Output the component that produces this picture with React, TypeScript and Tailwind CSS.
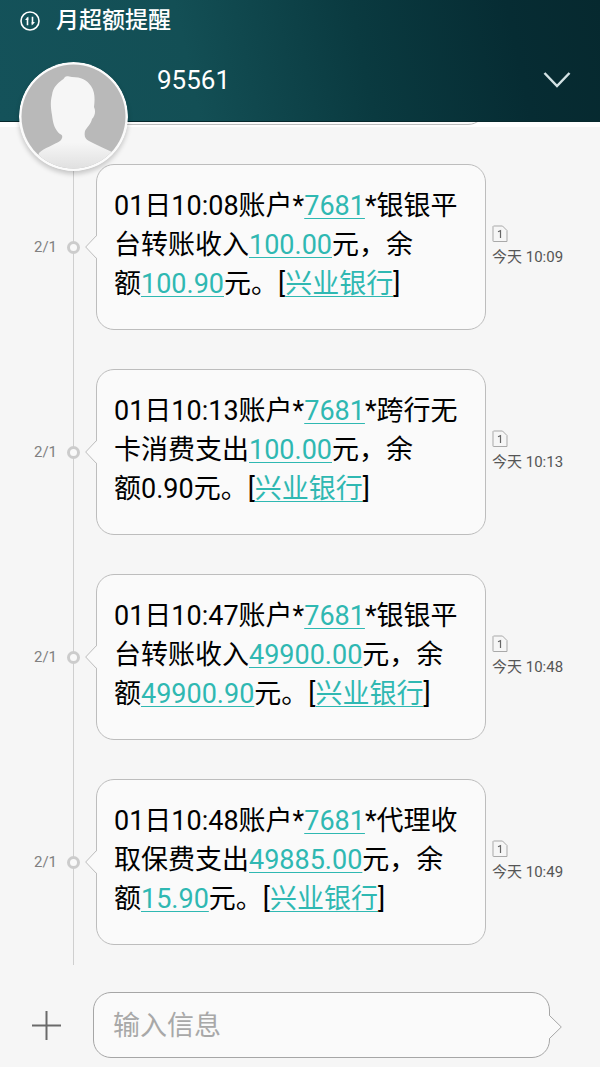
import { Fragment } from "react";

type Part = string | { link: string };

interface Message {
  id: number;
  date: string;
  time: string;
  lines: Part[][];
}

const MESSAGES: Message[] = [
  {
    id: 1,
    date: "2/1",
    time: "今天 10:09",
    lines: [
      ["01日10:08账户*", { link: "7681" }, "*银银平"],
      ["台转账收入", { link: "100.00" }, "元，余"],
      ["额", { link: "100.90" }, "元。[", { link: "兴业银行" }, "]"],
    ],
  },
  {
    id: 2,
    date: "2/1",
    time: "今天 10:13",
    lines: [
      ["01日10:13账户*", { link: "7681" }, "*跨行无"],
      ["卡消费支出", { link: "100.00" }, "元，余"],
      ["额0.90元。[", { link: "兴业银行" }, "]"],
    ],
  },
  {
    id: 3,
    date: "2/1",
    time: "今天 10:48",
    lines: [
      ["01日10:47账户*", { link: "7681" }, "*银银平"],
      ["台转账收入", { link: "49900.00" }, "元，余"],
      ["额", { link: "49900.90" }, "元。[", { link: "兴业银行" }, "]"],
    ],
  },
  {
    id: 4,
    date: "2/1",
    time: "今天 10:49",
    lines: [
      ["01日10:48账户*", { link: "7681" }, "*代理收"],
      ["取保费支出", { link: "49885.00" }, "元，余"],
      ["额", { link: "15.90" }, "元。[", { link: "兴业银行" }, "]"],
    ],
  },
];

function DataIcon() {
  return (
    <svg className="w-5 h-5" viewBox="0 0 20 20" fill="none" stroke="currentColor">
      <circle cx="10" cy="10" r="9" strokeWidth="1.6" />
      <path d="M7.500 14.200V6.500M12.500 5.800v7.500" strokeWidth="1.600" />
      <path d="M5 9L8.300 5.400V9zM15 11L11.700 14.600V11z" fill="currentColor" stroke="none" />
    </svg>
  );
}

function Avatar() {
  return (
    <svg
      className="absolute left-[19px] top-[62px] w-[109px] h-[109px] rounded-full shadow-[0_3px_5px_rgba(0,0,0,0.2)]"
      viewBox="0 0 109 109"
    >
      <defs>
        <linearGradient id="person" x1="0" y1="0" x2="0" y2="1">
          <stop offset="0.7" stopColor="#f6f6f6" />
          <stop offset="1" stopColor="#dedede" />
        </linearGradient>
        <clipPath id="face">
          <circle cx="54.5" cy="54.5" r="52" />
        </clipPath>
      </defs>
      <circle cx="54.5" cy="54.5" r="54.5" fill="#fbfbfb" />
      <circle cx="54.5" cy="54.5" r="52" fill="#b9b9b9" />
      <path
        clipPath="url(#face)"
        fill="url(#person)"
        d="M46 15C48 13.500 50 15 53 15C62 15 68 18 72 24C76 30 76 37 75 45C77 49 76 54 73 57C72 62 68 65 66 69C65 74 66 77 70 79C77 83 85 86 93 90L93 109H15L20 91C25 86 35 83 41 79C44 76 44 73 41 72C36 68 34 62 33 53C32 47 31 41 33 33C34 25 39 21 43 18C45 17 45 16 46 15Z"
      />
    </svg>
  );
}

function SimIcon() {
  return (
    <svg className="block w-4 h-[18px]" viewBox="0 0 16 18" fill="none">
      <path d="M1.500 1H10.500L15 5.500V16.500H1.500Q1 16.500 1 16V1.500Z" stroke="#a9a9a9" />
      <path d="M6 6.800L8.500 5.700V13" stroke="#666" strokeWidth="1.200" />
    </svg>
  );
}

function MessageRow({ message }: { message: Message }) {
  return (
    <li className="flex items-center py-[19px]">
      <div className="w-[67px] shrink-0 pl-[34px] text-[15px] leading-5 text-[#808080]">{message.date}</div>
      <div className="z-10 w-[13px] h-[13px] shrink-0 rounded-full border-[3px] border-[#cccccc] bg-[#f9f9f9]" />
      <div className="relative ml-4 flex-1 rounded-[18px] border border-[#bdbdbd] bg-[#fafafa] pt-[22px] pb-[25px] pl-[17px]">
        <svg className="absolute -left-3 top-[70px] w-[13px] h-6" viewBox="0 0 13 24" fill="none">
          <path d="M13 0.500H12L0.700 12L12 23.500H13Z" fill="#fafafa" />
          <path d="M11.500 0V0.500L0.700 12L11.500 23.500V24" stroke="#bdbdbd" />
        </svg>
        <p className="text-[27px] leading-[39px] text-black whitespace-nowrap">
          {message.lines.map((line, i) => (
            <Fragment key={i}>
              {i > 0 && <br />}
              {line.map((part, j) =>
                typeof part === "string" ? (
                  <Fragment key={j}>{part}</Fragment>
                ) : (
                  <a
                    key={j}
                    href="#"
                    className="text-[#2fb8b2] underline decoration-1 underline-offset-[3px] [text-decoration-skip-ink:none]"
                  >
                    {part.link}
                  </a>
                )
              )}
            </Fragment>
          ))}
        </p>
      </div>
      <div className="w-[114px] shrink-0 pl-[6px] pt-[2px] text-[15px] text-[#555555]">
        <SimIcon />
        <div className="leading-7">{message.time}</div>
      </div>
    </li>
  );
}

export default function App() {
  return (
    <div className="flex min-h-screen flex-col bg-[#f6f6f6] font-[Roboto,'Noto_Sans_CJK_SC',sans-serif]">
      <header className="relative z-20 border-b border-[#06282c] bg-[linear-gradient(78deg,#14525a_0%,#134f55_32%,#0a3a40_60%,#062c33_85%,#06292f_100%)] text-white">
        <div className="flex h-[42px] items-center gap-4 pl-5">
          <DataIcon />
          <span className="text-[23px] leading-8 font-medium">月超额提醒</span>
        </div>
        <div className="flex h-[79px] items-center justify-between pb-[3px] pl-[157px] pr-[29px]">
          <h1 className="text-[26px] leading-8">95561</h1>
          <button aria-label="展开" className="text-[#d3e2e4]">
            <svg className="w-7 h-5" viewBox="0 0 28 20" fill="none" stroke="currentColor" strokeWidth="2.500">
              <path d="M1.500 3L14 16L26.500 3" />
            </svg>
          </button>
        </div>
        <Avatar />
      </header>

      <main className="relative flex-1">
        {/* bottom edge of the message scrolled under the header */}
        <div className="flex h-[23px] items-start overflow-hidden bg-[linear-gradient(#fefefe_5px,#f6f6f6_5px)] pl-24 pr-[114px]">
          <div className="-mt-[37px] h-10 flex-1 rounded-[18px] border border-[#bdbdbd] bg-[#fafafa]" />
        </div>
        <div className="absolute bottom-0 left-[73px] top-0 w-px bg-[#cfcfcf]" />
        <ul className="relative flex flex-col gap-px">
          {MESSAGES.map((message) => (
            <MessageRow key={message.id} message={message} />
          ))}
        </ul>
      </main>

      <footer className="flex items-center pt-[27px] pb-[9px] pl-8 pr-[50px]">
        <button aria-label="添加" className="w-[61px] shrink-0 text-[#6a6a6a]">
          <svg className="w-[29px] h-[29px]" viewBox="0 0 29 29" stroke="currentColor" strokeWidth="2">
            <path d="M14.500 0V29M0 14.500H29" />
          </svg>
        </button>
        <div className="relative flex-1">
          <input
            type="text"
            aria-label="输入信息"
            placeholder="输入信息"
            className="block h-[66px] w-full rounded-[18px] border border-[#a6a6a6] bg-[#fafafa] px-[19px] pt-[2px] text-[27px] text-black outline-none placeholder:text-[#a8a8a8]"
          />
          <svg className="absolute -right-3 top-[23px] w-[13px] h-6" viewBox="0 0 13 24" fill="none">
            <path d="M0 0.500H1L12.300 12L1 23.500H0Z" fill="#fafafa" />
            <path d="M0.500 0V0.500L12.300 12L0.500 23.500V24" stroke="#a6a6a6" />
          </svg>
        </div>
      </footer>
    </div>
  );
}
